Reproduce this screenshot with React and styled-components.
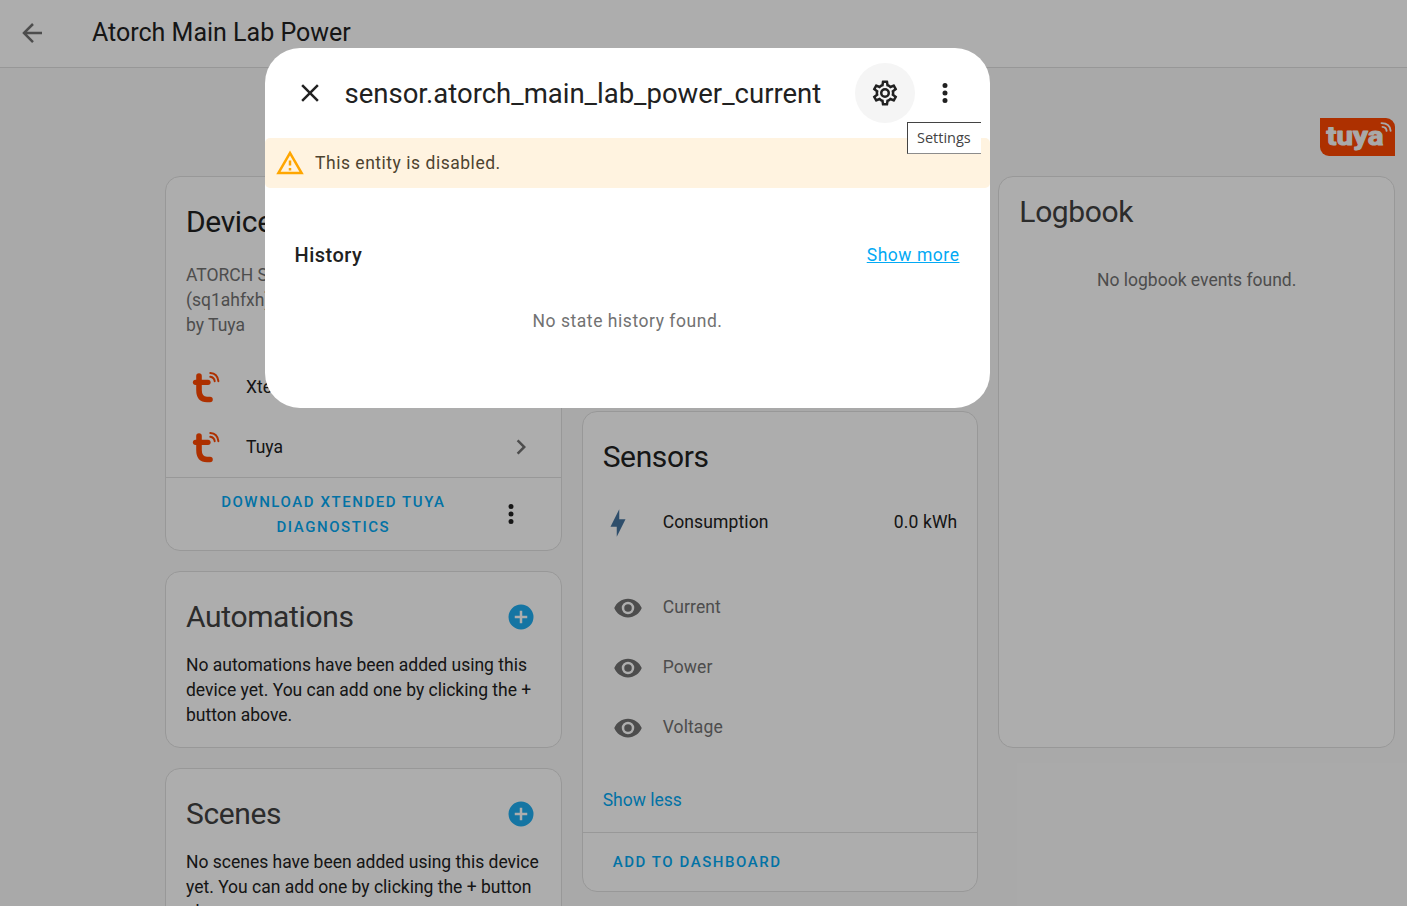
import React from 'react';
import styled, { createGlobalStyle } from 'styled-components';

const GlobalStyle = createGlobalStyle`
  * { box-sizing: border-box; }
  html, body { margin: 0; height: 100%; overflow: hidden; }
  body {
    font-family: Roboto, "Noto Sans", sans-serif;
    font-size: 17.5px;
    line-height: 25px;
    color: #212121;
    background: #fafafa;
  }
`;

const PATHS = {
  back: 'M20,11V13H8L13.5,18.5L12.08,19.92L4.16,12L12.08,4.08L13.5,5.5L8,11H20Z',
  close: 'M19,6.41L17.59,5L12,10.59L6.41,5L5,6.41L10.59,12L5,17.59L6.41,19L12,13.41L17.59,19L19,17.59L13.41,12L19,6.41Z',
  dots: 'M12,16A2,2 0 0,1 14,18A2,2 0 0,1 12,20A2,2 0 0,1 10,18A2,2 0 0,1 12,16M12,10A2,2 0 0,1 14,12A2,2 0 0,1 12,14A2,2 0 0,1 10,12A2,2 0 0,1 12,10M12,4A2,2 0 0,1 14,6A2,2 0 0,1 12,8A2,2 0 0,1 10,6A2,2 0 0,1 12,4Z',
  alert: 'M12,2L1,21H23M12,6L19.53,19H4.47M11,10V14H13V10M11,16V18H13V16',
  chevron: 'M8.59,16.58L13.17,12L8.59,7.41L10,6L16,12L10,18L8.59,16.58Z',
  plus: 'M17,13H13V17H11V13H7V11H11V7H13V11H17M12,2A10,10 0 0,0 2,12A10,10 0 0,0 12,22A10,10 0 0,0 22,12A10,10 0 0,0 12,2Z',
  eye: 'M12,9A3,3 0 0,0 9,12A3,3 0 0,0 12,15A3,3 0 0,0 15,12A3,3 0 0,0 12,9M12,17A5,5 0 0,1 7,12A5,5 0 0,1 12,7A5,5 0 0,1 17,12A5,5 0 0,1 12,17M12,4.5C7,4.5 2.73,7.61 1,12C2.73,16.39 7,19.5 12,19.5C17,19.5 21.27,16.39 23,12C21.27,7.61 17,4.5 12,4.5Z',
  bolt: 'M11 15H6L13 1V9H18L11 23V15Z',
  cog: 'M12,8A4,4 0 0,1 16,12A4,4 0 0,1 12,16A4,4 0 0,1 8,12A4,4 0 0,1 12,8M12,10A2,2 0 0,0 10,12A2,2 0 0,0 12,14A2,2 0 0,0 14,12A2,2 0 0,0 12,10M10,22C9.75,22 9.54,21.82 9.5,21.58L9.13,18.93C8.5,18.68 7.96,18.34 7.44,17.94L4.95,18.95C4.73,19.03 4.46,18.95 4.34,18.73L2.34,15.27C2.21,15.05 2.27,14.78 2.46,14.63L4.57,12.97L4.5,12L4.57,11L2.46,9.37C2.27,9.22 2.21,8.95 2.34,8.73L4.34,5.27C4.46,5.05 4.73,4.96 4.95,5.05L7.44,6.05C7.96,5.66 8.5,5.32 9.13,5.07L9.5,2.42C9.54,2.18 9.75,2 10,2H14C14.25,2 14.46,2.18 14.5,2.42L14.87,5.07C15.5,5.32 16.04,5.66 16.56,6.05L19.05,5.05C19.27,4.96 19.54,5.05 19.66,5.27L21.66,8.73C21.79,8.95 21.73,9.22 21.54,9.37L19.43,11L19.5,12L19.43,13L21.54,14.63C21.73,14.78 21.79,15.05 21.66,15.27L19.66,18.73C19.54,18.95 19.27,19.04 19.05,18.95L16.56,17.95C16.04,18.34 15.5,18.68 14.87,18.93L14.5,21.58C14.46,21.82 14.25,22 14,22H10M11.25,4L10.88,6.61C9.68,6.86 8.62,7.5 7.85,8.39L5.44,7.35L4.69,8.65L6.8,10.2C6.4,11.37 6.4,12.64 6.8,13.8L4.68,15.36L5.43,16.66L7.86,15.62C8.63,16.5 9.68,17.14 10.87,17.38L11.24,20H12.76L13.13,17.39C14.32,17.14 15.37,16.5 16.14,15.62L18.57,16.66L19.32,15.36L17.2,13.81C17.6,12.64 17.6,11.37 17.2,10.2L19.31,8.65L18.56,7.35L16.15,8.39C15.38,7.5 14.32,6.86 13.12,6.62L12.75,4H11.25Z',
};

const IconSvg = styled.svg`
  display: block;
  flex: none;
  width: ${(p) => p.$size}px;
  height: ${(p) => p.$size}px;
  fill: ${(p) => p.$color};
`;

const Icon = ({ name, size = 30, color = 'currentColor' }) => (
  <IconSvg viewBox="0 0 24 24" $size={size} $color={color} aria-hidden="true">
    <path d={PATHS[name]} />
  </IconSvg>
);

const Page = styled.div`
  position: relative;
  height: 906px;
  overflow: hidden;
  background: #fafafa;
`;

const TopBar = styled.header`
  display: flex;
  align-items: center;
  height: 68px;
  padding: 0 17px 2px;
  gap: 45px;
  color: #727272;
  background: #fff;
  border-bottom: 1px solid #dfdfdf;
`;

const TopTitle = styled.h1`
  margin: 0;
  font-size: 25px;
  font-weight: 400;
  color: #212121;
`;

const LogoBar = styled.div`
  display: flex;
  justify-content: flex-end;
  padding: 50px 12px 20px 0;
`;

const Columns = styled.main`
  display: grid;
  grid-template-columns: repeat(3, 1fr);
  align-items: start;
  gap: 20px;
  width: 1230px;
  margin-left: 165px;
`;

const Column = styled.div`
  display: flex;
  flex-direction: column;
  gap: 20px;
`;

const Card = styled.section`
  display: flex;
  flex-direction: column;
  height: ${(p) => p.$height}px;
  background: #fff;
  border: 1px solid #e0e0e0;
  border-radius: 15px;
`;

const CardHeader = styled.div`
  display: flex;
  align-items: center;
  justify-content: space-between;
  padding: ${(p) => p.$top}px 25px 0 20px;
`;

const CardTitle = styled.h2`
  margin: 0;
  font-size: 30px;
  line-height: 40px;
  font-weight: 400;
  letter-spacing: -0.012em;
  color: ${(p) => (p.$soft ? '#414141' : '#212121')};
`;

const CardText = styled.p`
  margin: 0;
  padding: ${(p) => p.$top}px 20px 0;
  color: ${(p) => (p.$muted ? '#727272' : '#212121')};
  text-align: ${(p) => (p.$center ? 'center' : 'left')};
`;

const IntegrationList = styled.div`
  margin-top: 19px;
`;

const IntegrationRow = styled.div`
  display: flex;
  align-items: center;
  height: 60px;
  padding: 0 25px 0 20px;
`;

const IntegrationName = styled.span`
  flex: 1;
  margin-left: 20px;
`;

const Muted = styled.span`
  display: flex;
  color: #727272;
`;

const CardFooter = styled.footer`
  display: flex;
  align-items: center;
  flex: 1;
  gap: 25px;
  padding: 0 35px 0 30px;
  border-top: 1px solid #e0e0e0;
`;

const TextButton = styled.button`
  flex: ${(p) => (p.$grow ? 1 : 'none')};
  padding: ${(p) => (p.$grow ? '2px 0 0' : 0)};
  border: 0;
  background: none;
  color: #03a9f4;
  font: 500 15px/25px Roboto, sans-serif;
  letter-spacing: 0.104em;
  text-transform: uppercase;
`;

const SensorRow = styled.div`
  display: flex;
  align-items: center;
  height: 60px;
  padding: 0 20px;
  letter-spacing: 0.007em;
  color: ${(p) => (p.$muted ? '#727272' : '#212121')};
`;

const SensorIcon = styled.span`
  display: flex;
  width: 60px;
  padding: 2px 0 0 ${(p) => p.$indent}px;
  color: ${(p) => p.$color};
`;

const SensorName = styled.span`
  flex: 1;
`;

const SensorGroup = styled.div`
  margin-top: ${(p) => p.$top}px;
`;

const ShowLess = styled.a`
  margin: 31px 20px 19px;
  color: #03a9f4;
`;

const Scrim = styled.div`
  position: absolute;
  inset: 0;
  display: flex;
  justify-content: center;
  align-items: flex-start;
  padding: 48px 152px 0 0;
  background: rgba(0, 0, 0, 0.32);
`;

const Dialog = styled.div`
  position: relative;
  width: 725px;
  height: 360px;
  background: #fff;
  border-radius: 35px;
`;

const DialogHeader = styled.div`
  display: flex;
  align-items: center;
  height: 90px;
  padding: 0 15px;
`;

const RoundButton = styled.button`
  display: flex;
  align-items: center;
  justify-content: center;
  width: 60px;
  height: 60px;
  padding: 0;
  border: 0;
  border-radius: 50%;
  color: #212121;
  background: ${(p) => (p.$active ? '#f5f5f5' : 'transparent')};
`;

const DialogTitle = styled.h2`
  flex: 1;
  margin: 0 0 0 4.5px;
  font-size: 27.5px;
  line-height: 35px;
  font-weight: 400;
  white-space: nowrap;
`;

const Alert = styled.div`
  display: flex;
  align-items: center;
  gap: 10px;
  height: 50px;
  padding: 0 10px;
  border-radius: 5px;
  background: #fff3e0;
  color: #4d4330;
  letter-spacing: 0.03em;
`;

const HistoryHeader = styled.div`
  display: flex;
  align-items: center;
  justify-content: space-between;
  padding: 52px 30.5px 0 29.5px;
`;

const HistoryTitle = styled.h3`
  margin: 0;
  font-size: 20px;
  line-height: 30px;
  font-weight: 500;
  letter-spacing: 0.025em;
`;

const HistoryLink = styled.a`
  color: #03a9f4;
  letter-spacing: 0.031em;
  text-decoration: underline;
`;

const EmptyHistory = styled.p`
  margin: 39px 0 0;
  text-align: center;
  color: #727272;
  letter-spacing: 0.031em;
`;

const Tooltip = styled.div`
  position: absolute;
  left: 642px;
  top: 74px;
  width: 74px;
  height: 32px;
  padding-left: 9px;
  border: solid #434343;
  border-width: 1px 0 1px 1px;
  border-bottom-color: #8c8c8c;
  background: #fff;
  color: #434343;
  font: 14.5px/29px "Open Sans", sans-serif;
`;

const BrandMark = styled.svg`
  display: block;
  flex: none;
  width: 40px;
  height: 40px;
`;

const BrandBadge = styled.svg`
  display: block;
  width: 75px;
  height: 38px;
`;

const TuyaMark = () => (
  <BrandMark viewBox="0 0 40 40" fill="none" stroke="#ff4800" strokeLinecap="round">
    <path d="M13 9V23Q13 32.5 21 32.5H24" strokeWidth="5.6" />
    <path d="M9.5 15.3H22" strokeWidth="5.2" />
    <path d="M24.3 9.8Q28.2 10.4 28.7 14.2" strokeWidth="2" />
    <path d="M24.3 6.1Q31.5 6.6 32.4 14.2" strokeWidth="2" />
  </BrandMark>
);

const BrandText = styled.text`
  font-family: Roboto, sans-serif;
  font-weight: 700;
  font-size: 25px;
  stroke-linejoin: round;
`;

const TuyaBadge = () => (
  <BrandBadge viewBox="0 0 75 38">
    <path d="M0 0H66A9 9 0 0 1 75 9V38H9A9 9 0 0 1 0 29Z" fill="#ff4800" />
    <BrandText x="6.5" y="26.5" fill="#fafafa" stroke="#fafafa" strokeWidth="1" textLength="57" lengthAdjust="spacingAndGlyphs">
      tuya
    </BrandText>
    <g fill="none" stroke="#fafafa" strokeWidth="1.9" strokeLinecap="round">
      <path d="M62.5 8.9Q66.2 9.2 66.6 12.8" />
      <path d="M61.5 5.1Q70 5.2 70.6 12.8" />
    </g>
  </BrandBadge>
);

const DISABLED_SENSORS = ['Current', 'Power', 'Voltage'];

const EmptyCard = ({ title, height, children }) => (
  <Card $height={height}>
    <CardHeader $top={25}>
      <CardTitle $soft>{title}</CardTitle>
      <Icon name="plus" color="#1fadf0" />
    </CardHeader>
    <CardText $top={16}>{children}</CardText>
  </Card>
);

export default function App() {
  return (
    <Page>
      <GlobalStyle />
      <TopBar>
        <Icon name="back" />
        <TopTitle>Atorch Main Lab Power</TopTitle>
      </TopBar>
      <LogoBar>
        <TuyaBadge />
      </LogoBar>
      <Columns>
        <Column>
          <Card $height={375}>
            <CardHeader $top={25}>
              <CardTitle>Device info</CardTitle>
            </CardHeader>
            <CardText $top={21} $muted>
              ATORCH S1
              <br />
              (sq1ahfxh)
              <br />
              by Tuya
            </CardText>
            <IntegrationList>
              {['Xtended Tuya', 'Tuya'].map((name) => (
                <IntegrationRow key={name}>
                  <TuyaMark />
                  <IntegrationName>{name}</IntegrationName>
                  <Muted>
                    <Icon name="chevron" />
                  </Muted>
                </IntegrationRow>
              ))}
            </IntegrationList>
            <CardFooter>
              <TextButton $grow>
                Download Xtended Tuya
                <br />
                Diagnostics
              </TextButton>
              <Icon name="dots" />
            </CardFooter>
          </Card>
          <EmptyCard title="Automations" height={177}>
            No automations have been added using this device yet. You can add one by clicking the + button above.
          </EmptyCard>
          <EmptyCard title="Scenes" height={177}>
            No scenes have been added using this device yet. You can add one by clicking the + button above.
          </EmptyCard>
        </Column>
        <Column>
          <Card $height={215} />
          <Card $height={481}>
            <CardHeader $top={25}>
              <CardTitle>Sensors</CardTitle>
            </CardHeader>
            <SensorGroup $top={15}>
              <SensorRow>
                <SensorIcon $indent={0} $color="#44739e">
                  <Icon name="bolt" />
                </SensorIcon>
                <SensorName>Consumption</SensorName>
                <span>0.0 kWh</span>
              </SensorRow>
            </SensorGroup>
            <SensorGroup $top={25}>
              {DISABLED_SENSORS.map((name) => (
                <SensorRow key={name} $muted>
                  <SensorIcon $indent={10} $color="#727272">
                    <Icon name="eye" />
                  </SensorIcon>
                  <SensorName>{name}</SensorName>
                </SensorRow>
              ))}
            </SensorGroup>
            <ShowLess>Show less</ShowLess>
            <CardFooter>
              <TextButton>Add to dashboard</TextButton>
            </CardFooter>
          </Card>
        </Column>
        <Column>
          <Card $height={572}>
            <CardHeader $top={15}>
              <CardTitle $soft>Logbook</CardTitle>
            </CardHeader>
            <CardText $top={36} $muted $center>
              No logbook events found.
            </CardText>
          </Card>
        </Column>
      </Columns>
      <Scrim>
        <Dialog role="dialog">
          <DialogHeader>
            <RoundButton>
              <Icon name="close" />
            </RoundButton>
            <DialogTitle>sensor.atorch_main_lab_power_current</DialogTitle>
            <RoundButton $active>
              <Icon name="cog" />
            </RoundButton>
            <RoundButton>
              <Icon name="dots" />
            </RoundButton>
          </DialogHeader>
          <Alert>
            <Icon name="alert" color="#ffa600" />
            This entity is disabled.
          </Alert>
          <HistoryHeader>
            <HistoryTitle>History</HistoryTitle>
            <HistoryLink>Show more</HistoryLink>
          </HistoryHeader>
          <EmptyHistory>No state history found.</EmptyHistory>
          <Tooltip>Settings</Tooltip>
        </Dialog>
      </Scrim>
    </Page>
  );
}
